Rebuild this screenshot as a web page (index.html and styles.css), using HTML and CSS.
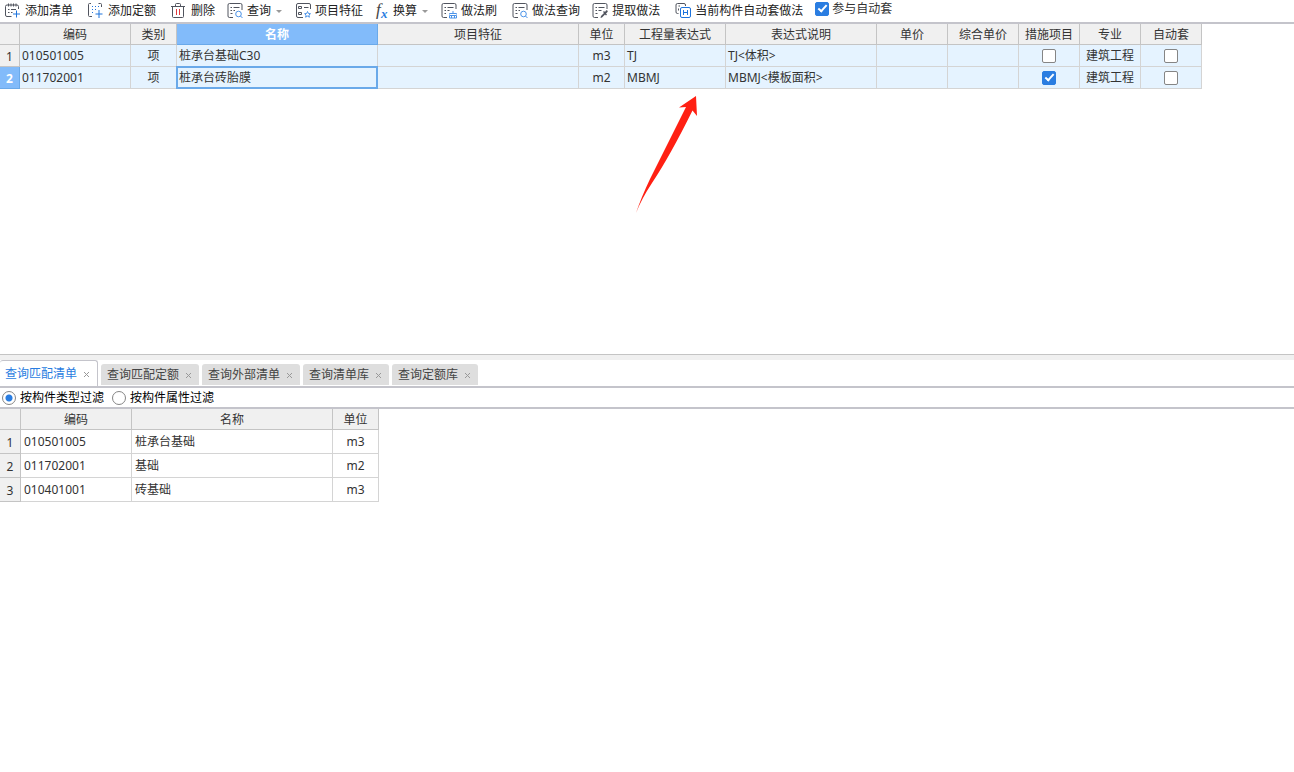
FILE: index.html
```
<!DOCTYPE html>
<html lang="zh-CN">
<head>
<meta charset="utf-8">
<title>构件做法</title>
<link rel="stylesheet" href="styles.css">
</head>
<body>
<main class="workspace">
  <section class="pane pane-top">
    <div class="toolbar" role="toolbar">
      <button class="tool tool-wide" type="button">
        <svg class="icon" viewBox="0 0 16 16"><path d="M6.500 13.500H2a1.500 1.500 0 0 1-1.500-1.500V3.500a1.500 1.500 0 0 1 1.500-1.500h10a1.500 1.500 0 0 1 1.500 1.500V6M3.500 .500v3M6 .500v3M8.500 .500v3M11 .500v3"/><path d="M3 6.500h1.500M6 6.500h5M3 9.500h1.500M6 9.500h1.500"/><path class="blue" d="M11.500 7.500v7M8 11h7"/></svg>
        <span>添加清单</span>
      </button>
      <button class="tool tool-wide" type="button">
        <svg class="icon" viewBox="0 0 16 16"><path d="M3 .500H1.500a1 1 0 0 0-1 1V12.500a1 1 0 0 0 1 1H4M10.500 .500h2a1 1 0 0 1 1 1V4"/><path class="blue dots" d="M4 3.500H12M4 6.500H9M4 9.500H7"/><path class="blue" d="M11 7v8M7.500 11H14.500"/></svg>
        <span>添加定额</span>
      </button>
      <button class="tool" type="button">
        <svg class="icon" viewBox="0 0 16 16"><path d="M0 3.500h14M4.500 3V1.500a1 1 0 0 1 1-1h3a1 1 0 0 1 1 1V3M1.500 4v9.500a1 1 0 0 0 1 1h9a1 1 0 0 0 1-1V4"/><path class="red" d="M5.500 6v6M8.500 6v6"/></svg>
        <span>删除</span>
      </button>
      <button class="tool" type="button">
        <svg class="icon" viewBox="0 0 16 16"><path d="M6 14.500H2.500a1.500 1.500 0 0 1-1.500-1.500V2a1.500 1.500 0 0 1 1.500-1.500h11a1.500 1.500 0 0 1 1.500 1.500V7M3.500 4.500H5M6.500 4.500h6M3.500 7.500H5M6.500 7.500h1.500M3.500 10.500h2"/><circle class="blue-light" cx="11.500" cy="11" r="2.800"/><path class="blue-light" d="M13.500 13l2 2"/></svg>
        <span>查询</span>
        <svg class="caret" viewBox="0 0 8 8"><path d="M1 3h6L4 6z"/></svg>
      </button>
      <button class="tool" type="button">
        <svg class="icon" viewBox="0 0 16 16"><path d="M8 14.500H3a1.500 1.500 0 0 1-1.500-1.500V2a1.500 1.500 0 0 1 1.500-1.500h11a1.500 1.500 0 0 1 1.500 1.500V6M3.500 3.500h3v2h-3zM3.500 9.500h3v2h-3zM9 4.500h4.500"/><path class="blue-light" d="M12.500 8.500l.900 2 2.100.200-1.600 1.400.500 2.100-1.900-1.100-1.900 1.100.500-2.100-1.500-1.400 2.100-.200z"/></svg>
        <span>项目特征</span>
      </button>
      <button class="tool" type="button">
        <svg class="icon icon-fx" viewBox="0 0 14 16"><text class="fx-f" x="1" y="12">f</text><text class="fx-x" x="6" y="15">x</text></svg>
        <span>换算</span>
        <svg class="caret" viewBox="0 0 8 8"><path d="M1 3h6L4 6z"/></svg>
      </button>
      <button class="tool tool-wide" type="button">
        <svg class="icon" viewBox="0 0 16 16"><path d="M6 14.500H2.500a1.500 1.500 0 0 1-1.500-1.500V2a1.500 1.500 0 0 1 1.500-1.500h11a1.500 1.500 0 0 1 1.500 1.500V6M3.500 4.500H5M6.500 4.500h6M3.500 7.500H5M6.500 7.500h2M3.500 10.500H5"/><path class="blue-light" d="M12 8v2M8.500 11.500v-1h7v1M8.500 12.500v2.500h7v-2.500zM10.500 12.500v2.500M13.500 12.500v2.500"/></svg>
        <span>做法刷</span>
      </button>
      <button class="tool" type="button">
        <svg class="icon" viewBox="0 0 16 16"><path d="M6 14.500H2.500a1.500 1.500 0 0 1-1.500-1.500V2a1.500 1.500 0 0 1 1.500-1.500h11a1.500 1.500 0 0 1 1.500 1.500V7M3.500 4.500H5M6.500 4.500h6M3.500 7.500H5M6.500 7.500h1.500M3.500 10.500h2"/><circle class="blue-light" cx="11.500" cy="11" r="2.800"/><path class="blue-light" d="M13.500 13l2 2"/></svg>
        <span>做法查询</span>
      </button>
      <button class="tool tool-wide" type="button">
        <svg class="icon" viewBox="0 0 16 16"><path d="M6 14.500H2.500a1.500 1.500 0 0 1-1.500-1.500V2a1.500 1.500 0 0 1 1.500-1.500h11a1.500 1.500 0 0 1 1.500 1.500V6M3.500 4.500H5M6.500 4.500h6M3.500 7.500H5M6.500 7.500h3M3.500 10.500h2"/><path class="ink" d="M8.500 15l.500-2 3-3-1-1 1-1 1 1 1-1.500c1-.800 2.300.500 1.500 1.500L14 10.500l1 1-1 1-1-1-3 3z"/></svg>
        <span>提取做法</span>
      </button>
      <button class="tool" type="button">
        <svg class="icon" viewBox="0 0 16 16"><path d="M3.500 10.500H2.500a1.500 1.500 0 0 1-1.500-1.500V2a1.500 1.500 0 0 1 1.500-1.500H9a1.500 1.500 0 0 1 1.500 1.500V3M3.500 3h1.500M3.500 5.500v2"/><rect class="blue" x="5.500" y="4.500" width="10" height="10" rx="1.500"/><path class="blue" d="M8.500 7v5M12.500 7v5M8.500 9.500h4"/></svg>
        <span>当前构件自动套做法</span>
      </button>
      <label class="auto-apply"><input class="check" type="checkbox" checked><span>参与自动套</span></label>
    </div>

    <div class="grid-wrap">
      <table class="grid grid-main">
        <colgroup><col class="w20"><col class="w111"><col class="w46"><col class="w201"><col class="w201"><col class="w46"><col class="w101"><col class="w151"><col class="w71"><col class="w71"><col class="w61"><col class="w61"><col class="w61"></colgroup>
        <thead>
          <tr><th></th><th>编码</th><th>类别</th><th class="picked">名称</th><th>项目特征</th><th>单位</th><th>工程量表达式</th><th>表达式说明</th><th>单价</th><th>综合单价</th><th>措施项目</th><th>专业</th><th>自动套</th></tr>
        </thead>
        <tbody>
          <tr><th>1</th><td>010501005</td><td class="mid">项</td><td>桩承台基础C30</td><td></td><td class="mid">m3</td><td>TJ</td><td>TJ&lt;体积&gt;</td><td></td><td></td><td class="mid"><input class="check" type="checkbox" aria-label="措施项目"></td><td class="mid">建筑工程</td><td class="mid"><input class="check" type="checkbox" aria-label="自动套"></td></tr>
          <tr><th class="picked">2</th><td>011702001</td><td class="mid">项</td><td class="current">桩承台砖胎膜</td><td></td><td class="mid">m2</td><td>MBMJ</td><td>MBMJ&lt;模板面积&gt;</td><td></td><td></td><td class="mid"><input class="check" type="checkbox" aria-label="措施项目" checked></td><td class="mid">建筑工程</td><td class="mid"><input class="check" type="checkbox" aria-label="自动套"></td></tr>
        </tbody>
      </table>
      <svg class="pointer" viewBox="0 0 62 118"><path d="M60 0L61 20 56.500 14.500Q34 60 16 87Q6 102 0 117Q5 102 14 83L50 11L43 11.500z"/></svg>
    </div>
  </section>

  <div class="splitter" role="separator"></div>

  <section class="pane">
    <div class="tabs">
      <div class="tab tab-active"><button type="button">查询匹配清单</button><button class="close" type="button" aria-label="关闭"><svg viewBox="0 0 5 5"><path d="M0 0l5 5M5 0L0 5"/></svg></button></div>
      <div class="tab"><button type="button">查询匹配定额</button><button class="close" type="button" aria-label="关闭"><svg viewBox="0 0 5 5"><path d="M0 0l5 5M5 0L0 5"/></svg></button></div>
      <div class="tab"><button type="button">查询外部清单</button><button class="close" type="button" aria-label="关闭"><svg viewBox="0 0 5 5"><path d="M0 0l5 5M5 0L0 5"/></svg></button></div>
      <div class="tab"><button type="button">查询清单库</button><button class="close" type="button" aria-label="关闭"><svg viewBox="0 0 5 5"><path d="M0 0l5 5M5 0L0 5"/></svg></button></div>
      <div class="tab"><button type="button">查询定额库</button><button class="close" type="button" aria-label="关闭"><svg viewBox="0 0 5 5"><path d="M0 0l5 5M5 0L0 5"/></svg></button></div>
    </div>
    <div class="filters">
      <label><input class="radio" type="radio" name="filter" checked><span>按构件类型过滤</span></label>
      <label><input class="radio" type="radio" name="filter"><span>按构件属性过滤</span></label>
    </div>
    <table class="grid grid-match">
      <colgroup><col class="w21"><col class="w111"><col class="w201"><col class="w46"></colgroup>
      <thead><tr><th></th><th>编码</th><th>名称</th><th>单位</th></tr></thead>
      <tbody>
        <tr><th>1</th><td>010501005</td><td>桩承台基础</td><td class="mid">m3</td></tr>
        <tr><th>2</th><td>011702001</td><td>基础</td><td class="mid">m2</td></tr>
        <tr><th>3</th><td>010401001</td><td>砖基础</td><td class="mid">m3</td></tr>
      </tbody>
    </table>
  </section>
</main>
</body>
</html>
```
FILE: styles.css
```
* { box-sizing: border-box; }

body {
  margin: 0;
  background: #fff;
  color: #333;
  font: 12px/18px "Noto Sans", "Noto Sans CJK SC", sans-serif;
}

button {
  margin: 0;
  padding: 0;
  border: 0;
  background: none;
  color: inherit;
  font: inherit;
}

input { margin: 0; }

.workspace {
  display: grid;
  grid-template-rows: minmax(0, 177fr) 6px minmax(0, 206fr);
  height: 100vh;
}

.pane { overflow: hidden; }

/* Toolbar */
.toolbar {
  display: flex;
  align-items: center;
  gap: 12px;
  height: 24px;
  padding: 0 5px 1px;
  border-bottom: 2px solid #c4c4cb;
  white-space: nowrap;
}

.tool {
  display: flex;
  align-items: center;
  gap: 4px;
  color: #222;
}

.tool-wide { padding-right: 3px; }

.icon {
  width: 16px;
  height: 16px;
  overflow: visible;
  fill: none;
  stroke: #50545e;
}

.icon-fx { width: 14px; }

.icon .blue { stroke: #1f74dc; }
.icon .blue-light { stroke: #4b93e8; }
.icon .red { stroke: #e0393e; }
.icon .dots { stroke-dasharray: 1 2; }
.icon .ink { fill: #50545e; stroke: none; }

.icon text {
  stroke: none;
  font-family: "Liberation Serif", serif;
  font-style: italic;
  line-height: 1;
}

.icon .fx-f { fill: #444; font-size: 17px; }
.icon .fx-x { fill: #2a7de1; font-size: 13px; font-weight: bold; }

.caret {
  width: 8px;
  height: 8px;
  fill: #999;
}

.auto-apply {
  display: flex;
  align-self: flex-start;
  align-items: center;
  gap: 3px;
  height: 17px;
}

.check {
  appearance: none;
  display: block;
  width: 14px;
  height: 14px;
  border: 1px solid #858585;
  border-radius: 2px;
  background: #fff;
}

.check:checked {
  border-color: #2a7de1;
  background: #2a7de1;
}

.check:checked::after {
  content: "";
  display: block;
  width: 3px;
  height: 7px;
  margin-left: 4px;
  border: solid #fff;
  border-width: 0 2px 2px 0;
  transform: rotate(42deg);
}

.mid .check { margin: 0 auto; }

/* Data grids */
.grid-wrap { position: relative; }

.grid {
  table-layout: fixed;
  width: 0;
  border-spacing: 0;
}

.w20 { width: 20px; }
.w21 { width: 21px; }
.w46 { width: 46px; }
.w61 { width: 61px; }
.w71 { width: 71px; }
.w101 { width: 101px; }
.w111 { width: 111px; }
.w151 { width: 151px; }
.w201 { width: 201px; }

.grid th,
.grid td {
  padding: 0;
  border: solid #d4d4d4;
  border-width: 0 1px 1px 0;
  font-weight: normal;
  text-align: left;
  white-space: nowrap;
}

.grid th {
  padding-top: 2px;
  border-color: #c4c4c4;
  background: #f0f0f0;
  text-align: center;
}

.grid thead th { height: 21px; }

.grid .picked {
  border-color: #6aa9e9;
  background: #82bbfa;
  color: #fff;
  font-weight: bold;
}

.grid-main td { height: 22px; padding-left: 2px; background: #e5f3ff; }
.grid-match td { height: 24px; padding-left: 3px; }
.grid .mid { padding: 0; text-align: center; }

.grid .current { position: relative; }

.current::after {
  content: "";
  position: absolute;
  inset: -1px;
  border: 2px solid #6aa9e9;
}

.pointer {
  position: absolute;
  top: 72px;
  left: 636px;
  width: 62px;
  height: 118px;
  fill: #ff2013;
}

.splitter {
  border-top: 1px solid #c4c4c4;
  background: #f0f0f0;
}

/* Query tabs */
.tabs {
  display: flex;
  align-items: flex-end;
  gap: 3px;
  height: 28px;
  border-bottom: 2px solid #c4c4cb;
}

.tab {
  display: flex;
  align-items: center;
  gap: 7px;
  height: 21px;
  margin-bottom: 1px;
  padding: 0 8px 0 6px;
  border-radius: 3px 3px 0 0;
  background: #dedede;
  color: #444;
}

.tab-active {
  height: 26px;
  margin-bottom: 0;
  padding-left: 5px;
  border: solid #c4c4cb;
  border-width: 1px 1px 0 0;
  background: #fff;
  color: #2a7de1;
}

.close svg {
  display: block;
  width: 5px;
  height: 5px;
  margin-top: 1px;
  overflow: visible;
  stroke: #999;
}

.filters {
  display: flex;
  gap: 8px;
  height: 21px;
  padding: 0 2px;
  border-bottom: 2px solid #c4c4cb;
  color: #000;
}

.filters label {
  display: flex;
  align-items: center;
  gap: 4px;
}

.filters span { padding-top: 1px; }

.radio {
  appearance: none;
  width: 14px;
  height: 14px;
  border: 1px solid #858585;
  border-radius: 50%;
  background: #fff;
}

.radio:checked { background: radial-gradient(circle, #2a7de1 3px, #fff 4px); }
```
